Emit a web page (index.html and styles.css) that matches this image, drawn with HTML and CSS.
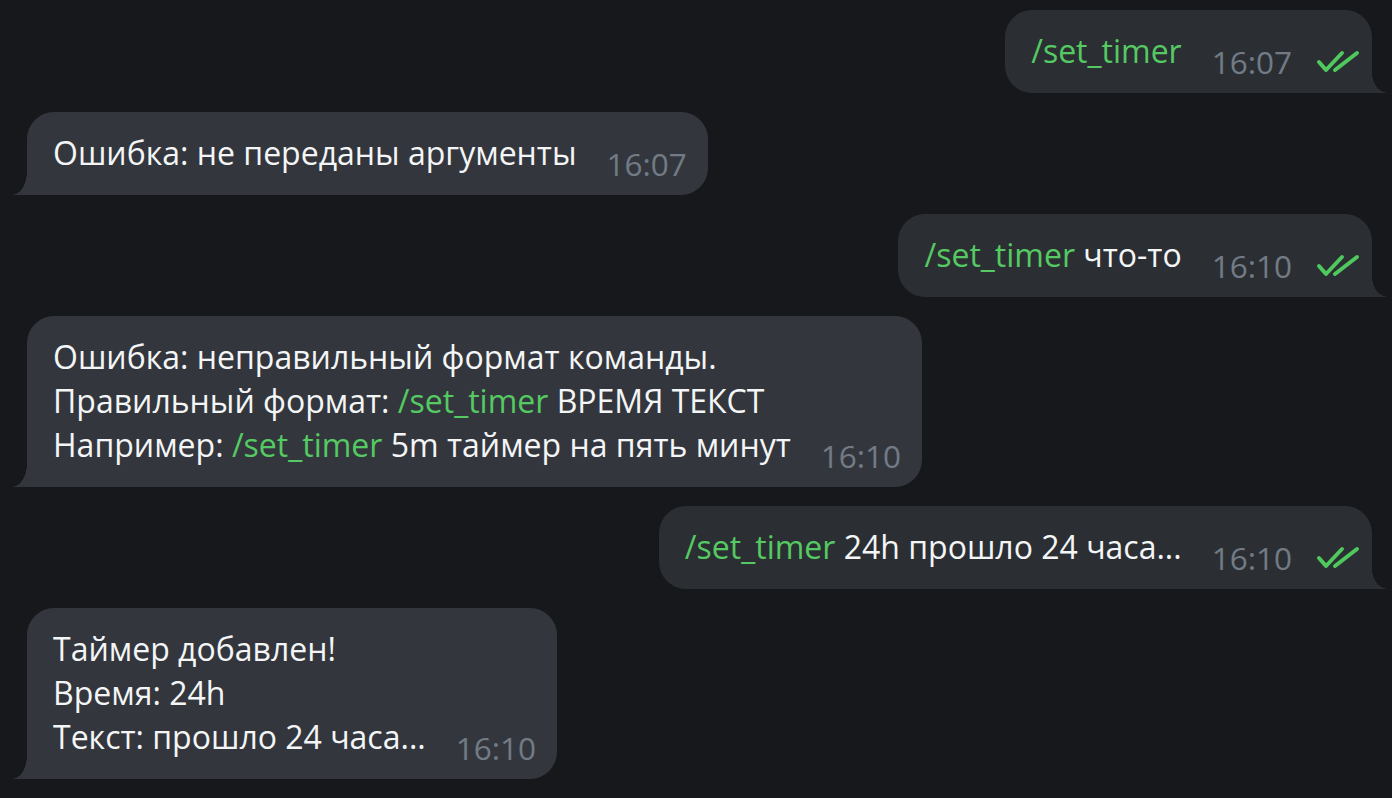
FILE: index.html
```html
<!DOCTYPE html>
<html lang="ru">
<head>
<meta charset="utf-8">
<title>Chat</title>
<link rel="stylesheet" href="styles.css">
</head>
<body>
<div class="chat">
  <div class="row out">
    <div class="bubble">
      <div class="text"><span class="cmd">/set_timer</span></div>
      <div class="meta"><span class="time">16:07</span><svg class="checks" viewBox="0 0 46 24" width="46" height="24"><path d="M5 12 L12 20 L28 3" /><path d="M21 20 L43 3" /></svg></div>
    </div>
  </div>
  <div class="row in">
    <div class="bubble">
      <div class="text">Ошибка: не переданы аргументы</div>
      <div class="meta"><span class="time">16:07</span></div>
    </div>
  </div>
  <div class="row out">
    <div class="bubble">
      <div class="text"><span class="cmd">/set_timer</span> что-то</div>
      <div class="meta"><span class="time">16:10</span><svg class="checks" viewBox="0 0 46 24" width="46" height="24"><path d="M5 12 L12 20 L28 3" /><path d="M21 20 L43 3" /></svg></div>
    </div>
  </div>
  <div class="row in">
    <div class="bubble">
      <div class="text">Ошибка: неправильный формат команды.<br>Правильный формат: <span class="cmd">/set_timer</span> ВРЕМЯ ТЕКСТ<br>Например: <span class="cmd">/set_timer</span> 5m таймер на пять минут</div>
      <div class="meta"><span class="time">16:10</span></div>
    </div>
  </div>
  <div class="row out">
    <div class="bubble">
      <div class="text"><span class="cmd">/set_timer</span> 24h прошло 24 часа...</div>
      <div class="meta"><span class="time">16:10</span><svg class="checks" viewBox="0 0 46 24" width="46" height="24"><path d="M5 12 L12 20 L28 3" /><path d="M21 20 L43 3" /></svg></div>
    </div>
  </div>
  <div class="row in">
    <div class="bubble">
      <div class="text">Таймер добавлен!<br>Время: 24h<br>Текст: прошло 24 часа...</div>
      <div class="meta"><span class="time">16:10</span></div>
    </div>
  </div>
</div>
</body>
</html>
```
FILE: styles.css
```css
html, body {
  margin: 0;
  padding: 0;
  background: #17181c;
}
body {
  font-family: "Open Sans", "Noto Sans", sans-serif;
  color: #f4f5f6;
  width: 1392px;
  height: 798px;
  overflow: hidden;
}
.chat {
  display: flex;
  flex-direction: column;
  gap: 19px;
  padding: 10px 20px 0 27px;
}
.row {
  display: flex;
}
.row.out {
  justify-content: flex-end;
}
.row.in {
  justify-content: flex-start;
}
.bubble {
  position: relative;
  display: flex;
  align-items: flex-end;
  padding: 19px 21px 20px 26px;
  font-size: 32px;
  line-height: 44px;
}
.row.in .bubble {
  background: #33373d;
  border-radius: 27px 27px 27px 0;
}
.row.out .bubble {
  background: #2b2f33;
  border-radius: 27px 27px 0 27px;
  padding-right: 12px;
}
.row.in .bubble::before {
  content: "";
  position: absolute;
  left: -15px;
  bottom: 0;
  width: 15px;
  height: 23px;
  background: radial-gradient(15px 23px at 0 0, rgba(51,55,61,0) 98%, #33373d 100%);
}
.row.out .bubble::after {
  content: "";
  position: absolute;
  right: -16px;
  bottom: 0;
  width: 16px;
  height: 20px;
  background: radial-gradient(16px 20px at 100% 0, rgba(43,47,51,0) 98%, #2b2f33 100%);
}
.text {
  white-space: nowrap;
}
.cmd {
  color: #55c962;
}
.meta {
  display: flex;
  align-items: center;
  gap: 22px;
  margin-left: 30px;
  margin-bottom: -11px;
}
.time {
  color: #727b85;
  font-size: 31.5px;
}
.checks {
  display: block;
  fill: none;
  stroke: #4fc85d;
  stroke-width: 4;
  stroke-linecap: round;
  stroke-linejoin: round;
}
```
